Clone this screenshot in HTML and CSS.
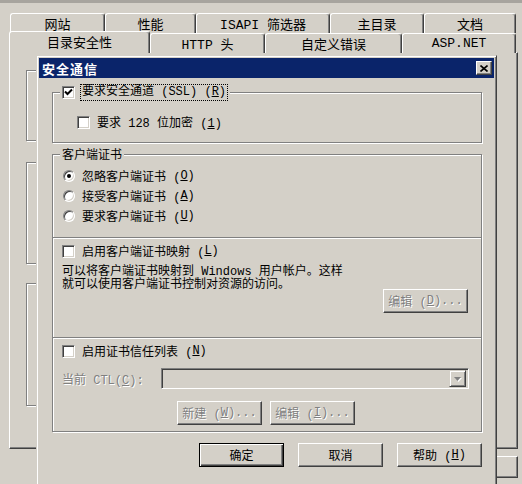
FILE: index.html
```html
<!DOCTYPE html>
<html>
<head>
<meta charset="utf-8">
<link rel="stylesheet" href="styles.css">
</head>
<body>

<div class="screen">
  <div class="topline"></div>

  <div class="tabrow back">
    <div class="tab">网站</div>
    <div class="tab">性能</div>
    <div class="tab">ISAPI 筛选器</div>
    <div class="tab">主目录</div>
    <div class="tab">文档</div>
  </div>
  <div class="tabrow front">
    <div class="tab active">目录安全性</div>
    <div class="tab">HTTP 头</div>
    <div class="tab">自定义错误</div>
    <div class="tab">ASP.NET</div>
  </div>

  <div class="page">
    <div class="frame frame-a"></div>
    <div class="frame frame-b"></div>
    <div class="frame frame-c"></div>
  </div>
  <div class="sheet-foot">
    <span class="btn ghost"></span>
  </div>

  <div class="dialog">
    <div class="titlebar">
      <span class="caption">安全通信</span>
      <span class="close">
        <svg width="8" height="7" viewBox="0 0 8 7"><path d="M0.5 0.5 L7.5 6.5 M7.5 0.5 L0.5 6.5" stroke="#000" stroke-width="1.6" fill="none"/></svg>
      </span>
    </div>

    <div class="dlg-body">

      <div class="group g-ssl">
        <div class="legend legend-check">
          <span class="check">
            <svg width="9" height="9" viewBox="0 0 9 9"><path d="M1 3.5 L3.5 6 L8 1.5" stroke="#000" stroke-width="2" fill="none"/></svg>
          </span>
          <span class="focus">要求安全通道 (SSL) (<u>R</u>)</span>
        </div>
        <div class="row sub">
          <span class="check"></span>
          <span>要求 128 位加密 (<u>1</u>)</span>
        </div>
      </div>

      <div class="group g-client">
        <div class="legend">客户端证书</div>
        <div class="radios">
          <div class="row"><span class="radio on"></span>忽略客户端证书 (<u>O</u>)</div>
          <div class="row"><span class="radio"></span>接受客户端证书 (<u>A</u>)</div>
          <div class="row"><span class="radio"></span>要求客户端证书 (<u>U</u>)</div>
        </div>
      </div>

      <div class="group g-map">
        <div class="row"><span class="check"></span>启用客户端证书映射 (<u>L</u>)</div>
        <div class="map-info">
          <p>可以将客户端证书映射到 Windows 用户帐户。这样<br>就可以使用客户端证书控制对资源的访问。</p>
          <button class="btn" disabled>编辑 (<u>D</u>)...</button>
        </div>
      </div>

      <div class="group g-ctl">
        <div class="row"><span class="check"></span>启用证书信任列表 (<u>N</u>)</div>
        <div class="ctl-row">
          <span class="dim">当前 CTL(<u>C</u>):</span>
          <div class="combo">
            <span class="drop">
              <svg width="7" height="4" viewBox="0 0 7 4"><path d="M0 0 H7 L3.5 4 Z" fill="#808080"/></svg>
            </span>
          </div>
        </div>
        <div class="ctl-buttons">
          <button class="btn" disabled>新建 (<u>W</u>)...</button>
          <button class="btn" disabled>编辑 (<u>I</u>)...</button>
        </div>
      </div>

      <div class="dlg-buttons">
        <button class="btn default">确定</button>
        <button class="btn">取消</button>
        <button class="btn">帮助 (<u>H</u>)</button>
      </div>

    </div>
  </div>
</div>

</body>
</html>
```

FILE: styles.css
```css
body {
  margin: 0;
  background: #d4d0c8;
  font: 12px "Liberation Mono", "Noto Sans CJK SC", monospace;
  color: #000;
}

.screen {
  width: 522px;
  height: 484px;
  position: relative;
  overflow: hidden;
  background: #d4d0c8;
}

.topline {
  height: 3px;
  background: #a7a49e;
}

/* tabs of the property sheet behind */
.tabrow {
  display: grid;
}

.tabrow.back {
  margin: 10px 0 0 10px;
  height: 20px;
  grid-template-columns: 95px 91px 134px 94px 92px;
}

.tabrow.front {
  margin-left: 9px;
  height: 19px;
  grid-template-columns: 141px 115px 137px 114px;
}

.tab {
  box-sizing: border-box;
  border: 1px solid;
  border-color: #fff #404040 transparent #fff;
  border-bottom: none;
  border-radius: 3px 3px 0 0;
  box-shadow: inset -1px 0 #808080;
  background: #d4d0c8;
  display: flex;
  align-items: center;
  justify-content: center;
  font-size: 13px;
}

.tab.active {
  position: relative;
  z-index: 1;
  margin-top: -2px;
  height: 22px;
  padding-bottom: 2px;
}

.page {
  margin-left: 9px;
  width: 509px;
  height: 397px;
  box-sizing: border-box;
  border: 1px solid;
  border-color: #fff #404040 #404040 #fff;
  box-shadow: inset -1px -1px #808080;
  padding: 17px 0 0 16px;
}

.frame {
  width: 460px;
  box-sizing: border-box;
  border: 1px solid #808080;
  box-shadow: 1px 1px 0 #fff, inset 1px 1px 0 #fff;
}

.frame-a { height: 71px; }
.frame-b { height: 102px; margin-top: 21px; }
.frame-c { height: 123px; margin-top: 19px; }

.sheet-foot {
  display: flex;
  justify-content: flex-end;
  margin-top: 7px;
  padding-right: 4px;
}

/* modal dialog */
.dialog {
  position: absolute;
  left: 36px;
  top: 55px;
  width: 461px;
  height: 440px;
  box-sizing: border-box;
  border: 1px solid;
  border-color: #d4d0c8 #404040 #404040 #d4d0c8;
  box-shadow: inset 1px 1px #fff, inset -1px -1px #808080;
  padding: 2px;
  background: #d4d0c8;
}

.titlebar {
  height: 20px;
  background: #0a246a;
  display: flex;
  align-items: center;
  justify-content: space-between;
}

.caption {
  padding-left: 3px;
  color: #fff;
  font-weight: bold;
  font-size: 13px;
  letter-spacing: 1px;
}

.close {
  width: 16px;
  height: 14px;
  margin-right: 2px;
  box-sizing: border-box;
  background: #d4d0c8;
  border: 1px solid;
  border-color: #fff #404040 #404040 #fff;
  box-shadow: inset -1px -1px #808080;
  display: flex;
  align-items: center;
  justify-content: center;
}

.dlg-body {
  padding: 0 12px 0 13px;
}

.group {
  border: 1px solid #808080;
  box-shadow: 1px 1px 0 #fff, inset 1px 1px 0 #fff;
}

.legend {
  width: max-content;
  margin-left: 7px;
  padding: 0 2px;
  background: #d4d0c8;
  display: flex;
  align-items: center;
  height: 16px;
  margin-top: -9px;
}

.legend-check {
  height: 18px;
  margin-top: -10px;
}

.legend-check .check {
  margin-right: 5px;
}

.focus {
  border: 1px dotted #000;
  padding: 0 1px;
  line-height: 15px;
}

.row {
  display: flex;
  align-items: center;
  height: 16px;
  margin-left: 9px;
}

.check {
  flex: none;
  width: 13px;
  height: 13px;
  box-sizing: border-box;
  background: #fff;
  border: 1px solid;
  border-color: #808080 #fff #fff #808080;
  box-shadow: inset 1px 1px #404040, inset -1px -1px #d4d0c8;
  margin-right: 7px;
  display: flex;
  align-items: center;
  justify-content: center;
}

.radio {
  flex: none;
  width: 12px;
  height: 12px;
  box-sizing: border-box;
  border-radius: 50%;
  background: #fff;
  border: 1px solid;
  border-color: #808080 #fff #fff #808080;
  box-shadow: inset 1px 1px #404040, inset -1px -1px #d4d0c8;
  margin-right: 7px;
  display: flex;
  align-items: center;
  justify-content: center;
}

.radio.on::after {
  content: "";
  width: 4px;
  height: 4px;
  border-radius: 50%;
  background: #000;
}

.g-ssl {
  margin-top: 14px;
  padding-bottom: 12px;
}

.g-ssl .sub {
  margin: 13px 0 0 24px;
}

.g-client {
  margin-top: 11px;
  padding-bottom: 11px;
}

.radios {
  margin-top: 4px;
}

.radios .row {
  height: 20px;
  margin-left: 10px;
}

.g-map {
  border-top: none;
  padding: 5px 0 24px;
}

.map-info {
  display: flex;
  align-items: flex-start;
  margin-top: 7px;
}

.map-info p {
  margin: 0 0 0 9px;
  line-height: 13px;
}

.map-info .btn {
  margin: 23px 13px 0 auto;
}

.g-ctl {
  border-top: none;
  padding: 5px 0 6px;
}

.ctl-row {
  display: flex;
  align-items: center;
  margin-top: 9px;
}

.dim,
.btn:disabled {
  color: #808080;
  text-shadow: 1px 1px 0 #fff;
}

.ctl-row .dim {
  margin-left: 9px;
}

.combo {
  margin: 0 12px 0 auto;
  width: 308px;
  height: 21px;
  box-sizing: border-box;
  border: 1px solid;
  border-color: #808080 #fff #fff #808080;
  box-shadow: inset 1px 1px #404040, inset -1px -1px #d4d0c8;
  padding: 1px 2px 1px 1px;
  display: flex;
  justify-content: flex-end;
}

.drop {
  width: 17px;
  height: 17px;
  box-sizing: border-box;
  border: 1px solid;
  border-color: #d4d0c8 #404040 #404040 #d4d0c8;
  box-shadow: inset 1px 1px #fff, inset -1px -1px #808080;
  display: flex;
  align-items: center;
  justify-content: center;
}

.drop svg {
  filter: drop-shadow(1px 1px 0 #fff);
}

.ctl-buttons {
  display: flex;
  gap: 8px;
  margin: 12px 0 0 124px;
}

.btn {
  width: 85px;
  height: 24px;
  box-sizing: border-box;
  background: #d4d0c8;
  border: 1px solid;
  border-color: #fff #404040 #404040 #fff;
  box-shadow: inset -1px -1px #808080;
  font: inherit;
  color: #000;
  padding: 0;
  display: flex;
  align-items: center;
  justify-content: center;
}

.btn.ghost {
  height: 22px;
}

.btn.default {
  border-color: #000;
  box-shadow: inset 1px 1px #fff, inset -1px -1px #404040, inset -2px -2px #808080;
}

.dlg-buttons {
  display: flex;
  justify-content: flex-end;
  gap: 14px;
  margin-top: 11px;
}
```
